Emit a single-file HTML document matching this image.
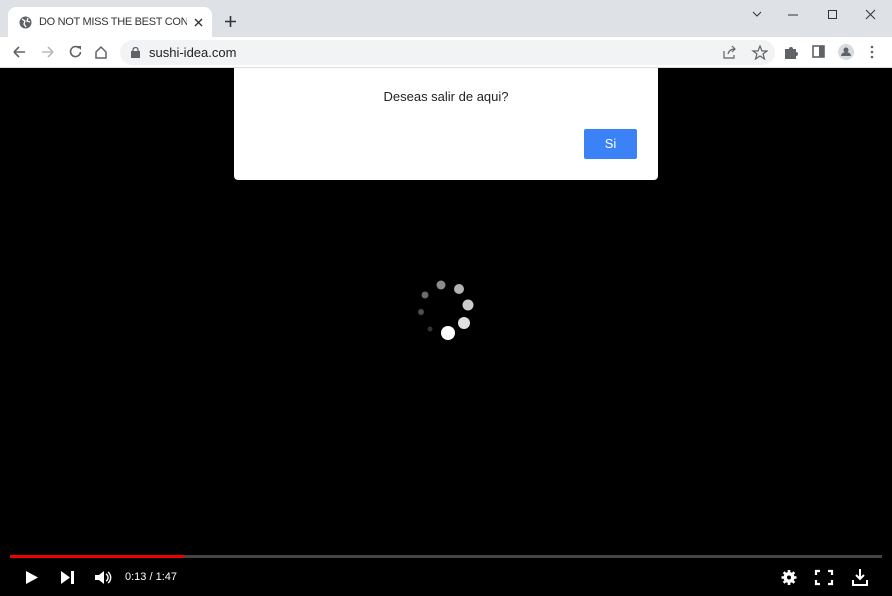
<!DOCTYPE html>
<html><head><style>
*{margin:0;padding:0;box-sizing:border-box}
body{width:892px;height:596px;overflow:hidden;background:#000;font-family:"Liberation Sans",sans-serif;position:relative}
.top{position:absolute;left:0;top:0;width:892px;height:37px;background:#dee1e6}
.tab{position:absolute;left:8px;top:7px;width:204px;height:31px;background:#fff;border-radius:8px 8px 0 0}
.tab span{position:absolute;left:31px;top:9px;font-size:11px;color:#333;white-space:nowrap;width:148px;overflow:hidden;letter-spacing:-0.3px}
.bar{position:absolute;left:0;top:37px;width:892px;height:31px;background:#fff;border-bottom:1px solid #ddd}
.url{position:absolute;left:120px;top:3px;width:655px;height:25px;background:#f1f3f4;border-radius:13px}
.url span{position:absolute;left:29px;top:5px;font-size:13px;color:#202124}
.dlg{position:absolute;left:234px;top:68px;width:424px;height:112px;background:#fff;border-radius:0 0 4px 4px}
.dlg p{position:absolute;left:0;width:424px;top:21px;text-align:center;font-size:13px;color:#222}
.btn{position:absolute;left:350px;top:61px;width:53px;height:30px;background:#3b82f6;color:#fff;font-size:13px;text-align:center;line-height:30px;border-radius:2px}
.prog{position:absolute;left:10px;top:555px;width:872px;height:3px;background:#444}
.prog i{position:absolute;left:0;top:0;width:174px;height:3px;background:#e00}
.t{position:absolute;left:125px;top:571px;color:#fff;font-size:11px}
svg{position:absolute}
</style></head><body>
<div class="top"></div>
<div class="tab"><svg style="left:11px;top:9px" width="13" height="13" viewBox="0 0 13 13"><circle cx="6.5" cy="6.5" r="6" fill="#5f6368"/><path d="M3 3l3 2-1 3 2 3M9 2l-1 3 3 1" stroke="#fff" stroke-width="1.3" fill="none"/></svg><span>DO NOT MISS THE BEST CONTENT</span><svg style="left:186px;top:11px" width="9" height="9"><path d="M1 1l7 7M8 1l-7 7" stroke="#333" stroke-width="1.4"/></svg></div>
<svg style="left:224px;top:15px" width="13" height="13"><path d="M6.5 1v11M1 6.5h11" stroke="#333" stroke-width="1.6"/></svg>
<svg style="left:750px;top:9px" width="130" height="12"><path d="M3 3l4 4 4-4" stroke="#333" fill="none"/><path d="M38 6h10" stroke="#333"/><rect x="78.5" y="1.5" width="8" height="8" stroke="#333" fill="none"/><path d="M116 1l9 9M125 1l-9 9" stroke="#333"/></svg>
<div class="bar">
<svg style="left:12px;top:8px" width="100" height="16"><path d="M2 7h11M2 7l5-5M2 7l5 5" stroke="#5f6368" stroke-width="1.6" fill="none"/><path d="M30 7h11M41 7l-5-5M41 7l-5 5" stroke="#bbb" stroke-width="1.6" fill="none"/><path d="M67 3a5 5 0 1 0 1.5 4" stroke="#5f6368" stroke-width="1.6" fill="none"/><path d="M65 1h4v4" fill="#5f6368"/><path d="M84 7l5-5 5 5v6h-10z" stroke="#5f6368" stroke-width="1.5" fill="none"/></svg>
<div class="url"><svg style="left:11px;top:7px" width="9" height="11"><rect x="0" y="4" width="9" height="7" fill="#5f6368"/><path d="M2 5V3a2.5 2.5 0 0 1 5 0v2" stroke="#5f6368" fill="none" stroke-width="1.3"/></svg><span>sushi-idea.com</span>
<svg style="left:603px;top:5px" width="45" height="15"><path d="M1 6v7h10v-3M5 9c1-4 4-5 7-5M9 1l3 3-3 3" stroke="#5f6368" fill="none" stroke-width="1.2"/><path d="M37 1l2 5h5l-4 3 1.5 5-4.5-3-4.5 3 1.5-5-4-3h5z" stroke="#5f6368" fill="none" stroke-width="1.2"/></svg></div>
<svg style="left:784px;top:7px" width="100" height="16"><path d="M1 5h4a2 2 0 0 1 4 0h3v3a2 2 0 0 1 0 4v3H1z" fill="#5f6368"/><rect x="29" y="2" width="11" height="11" stroke="#5f6368" stroke-width="1.6" fill="none"/><rect x="35" y="2" width="5" height="11" fill="#5f6368"/><circle cx="62" cy="8" r="8" fill="#d7dbe0"/><circle cx="62" cy="6" r="2.5" fill="#5f6368"/><path d="M57 12a5 4 0 0 1 10 0z" fill="#5f6368"/><circle cx="88" cy="3" r="1.3" fill="#5f6368"/><circle cx="88" cy="8" r="1.3" fill="#5f6368"/><circle cx="88" cy="13" r="1.3" fill="#5f6368"/></svg>
</div>
<div class="dlg"><p>Deseas salir de aqui?</p><div class="btn">Si</div></div>
<svg style="left:0;top:0" width="892" height="596"><g fill="#fff"><circle cx="441" cy="285" r="4.5" opacity=".55"/><circle cx="459" cy="289" r="5" opacity=".7"/><circle cx="468" cy="305" r="5.5" opacity=".8"/><circle cx="464" cy="323" r="6" opacity=".88"/><circle cx="448" cy="333" r="7"/><circle cx="430" cy="329" r="2.5" opacity=".2"/><circle cx="421" cy="312" r="3" opacity=".3"/><circle cx="425" cy="295" r="3.5" opacity=".42"/></g></svg>
<div class="prog"><i></i></div>
<svg style="left:0;top:565px" width="892" height="25"><g fill="#fff"><path d="M26 6l12 6.5-12 6.5z"/><path d="M61 6l9 6.5-9 6.5z"/><rect x="71" y="6" width="3" height="13"/><path d="M95 10h4l5-4v13l-5-4h-4z"/><path d="M106 9a4 4 0 0 1 0 7M108 7a7 7 0 0 1 0 11" stroke="#fff" stroke-width="1.4" fill="none"/><circle cx="789" cy="12.5" r="5.5"/><path d="M789 5v15M781.5 12.5h15M783.7 7.2l10.6 10.6M794.3 7.2l-10.6 10.6" stroke="#fff" stroke-width="2.6"/><circle cx="789" cy="12.5" r="2" fill="#000"/><path d="M816 10V6h4M828 6h4v4M832 15v4h-4M820 19h-4v-4" stroke="#fff" stroke-width="2.2" fill="none"/><path d="M860 4v10M856 10l4 4 4-4M853 15v5h14v-5" stroke="#fff" stroke-width="2" fill="none"/></g></svg>
<div class="t">0:13 / 1:47</div>
</body></html>
